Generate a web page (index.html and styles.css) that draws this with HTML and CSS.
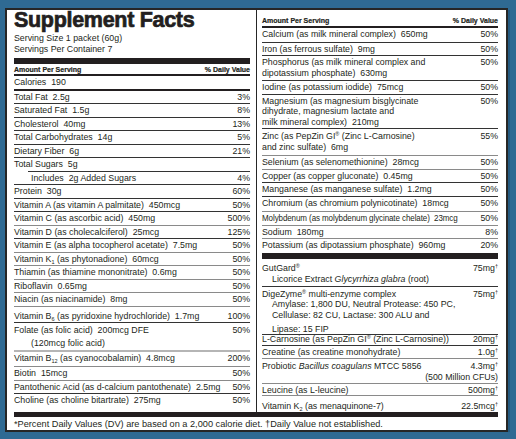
FILE: index.html
```html
<!DOCTYPE html>
<html>

<head>
    <title>Supplement Facts</title>
    <meta charset="utf-8">
    <link rel="stylesheet" href="styles.css">
</head>

<body>

    <div class="label">
        <div class="cols">

            <div class="col venstre">
                <h1>Supplement Facts</h1>
                <p class="serving">Serving Size 1 packet (60g)</p>
                <p class="serving">Servings Per Container 7</p>
                <div class="bar"></div>
                <div class="head"><span>Amount Per Serving</span><span>% Daily Value</span></div>

                <div class="row kalorier"><span>Calories&nbsp; 190</span><span></span></div>
                <div class="row"><span>Total Fat&nbsp; 2.5g</span><span>3%</span></div>
                <div class="row"><span>Saturated Fat&nbsp; 1.5g</span><span>8%</span></div>
                <div class="row"><span>Cholesterol&nbsp; 40mg</span><span>13%</span></div>
                <div class="row"><span>Total Carbohydrates&nbsp; 14g</span><span>5%</span></div>
                <div class="row"><span>Dietary Fiber&nbsp; 6g</span><span>21%</span></div>
                <div class="row sukker"><span>Total Sugars&nbsp; 5g</span><span></span></div>
                <div class="row"><span class="ind">Includes&nbsp; 2g Added Sugars</span><span>4%</span></div>
                <div class="row"><span>Protein&nbsp; 30g</span><span>60%</span></div>
                <div class="row"><span>Vitamin A (as vitamin A palmitate)&nbsp; 450mcg</span><span>50%</span></div>
                <div class="row lys"><span>Vitamin C (as ascorbic acid)&nbsp; 450mg</span><span>500%</span></div>
                <div class="row"><span>Vitamin D (as cholecalciferol)&nbsp; 25mcg</span><span>125%</span></div>
                <div class="row lys"><span>Vitamin E (as alpha tocopherol acetate)&nbsp; 7.5mg</span><span>50%</span></div>
                <div class="row lys"><span>Vitamin K<sub>1</sub> (as phytonadione)&nbsp; 60mcg</span><span>50%</span></div>
                <div class="row lys"><span>Thiamin (as thiamine mononitrate)&nbsp; 0.6mg</span><span>50%</span></div>
                <div class="row lys"><span>Riboflavin&nbsp; 0.65mg</span><span>50%</span></div>
                <div class="row lys"><span>Niacin (as niacinamide)&nbsp; 8mg</span><span>50%</span></div>
                <div class="row b6"><span>Vitamin B<sub>6</sub> (as pyridoxine hydrochloride)&nbsp; 1.7mg</span><span>100%</span></div>
                <div class="row folat"><span>Folate (as folic acid)&nbsp; 200mcg DFE<br><span class="ind">(120mcg folic acid)</span></span><span>50%</span></div>
                <div class="row b12 lys"><span>Vitamin B<sub>12</sub> (as cyanocobalamin)&nbsp; 4.8mcg</span><span>200%</span></div>
                <div class="row lys"><span>Biotin&nbsp; 15mcg</span><span>50%</span></div>
                <div class="row"><span>Pantothenic Acid (as d-calcium pantothenate)&nbsp; 2.5mg</span><span>50%</span></div>
                <div class="row sidste"><span>Choline (as choline bitartrate)&nbsp; 275mg</span><span>50%</span></div>
            </div>

            <div class="col hoejre">
                <div class="head top"><span>Amount Per Serving</span><span>% Daily Value</span></div>

                <div class="row luft"><span>Calcium (as milk mineral complex)&nbsp; 650mg</span><span>50%</span></div>
                <div class="row"><span>Iron (as ferrous sulfate)&nbsp; 9mg</span><span>50%</span></div>
                <div class="row luft"><span>Phosphorus (as milk mineral complex and<br>dipotassium phosphate)&nbsp; 630mg</span><span>50%</span></div>
                <div class="row"><span>Iodine (as potassium iodide)&nbsp; 75mcg</span><span>50%</span></div>
                <div class="row"><span>Magnesium (as magnesium bisglycinate<br>dihydrate, magnesium lactate and<br>milk mineral complex)&nbsp; 210mg</span><span>50%</span></div>
                <div class="row lys zink"><span>Zinc (as PepZin GI<sup>®</sup> (Zinc L-Carnosine)<br>and zinc sulfate)&nbsp; 6mg</span><span>55%</span></div>
                <div class="row lys"><span>Selenium (as selenomethionine)&nbsp; 28mcg</span><span>50%</span></div>
                <div class="row"><span>Copper (as copper gluconate)&nbsp; 0.45mg</span><span>50%</span></div>
                <div class="row"><span>Manganese (as manganese sulfate)&nbsp; 1.2mg</span><span>50%</span></div>
                <div class="row lys luft2"><span>Chromium (as chromium polynicotinate)&nbsp; 18mcg</span><span>50%</span></div>
                <div class="row lys"><span class="smal">Molybdenum (as molybdenum glycinate chelate)&nbsp; 23mcg</span><span>50%</span></div>
                <div class="row lys"><span>Sodium&nbsp; 180mg</span><span>8%</span></div>
                <div class="row ingen"><span>Potassium (as dipotassium phosphate)&nbsp; 960mg</span><span>20%</span></div>
                <div class="bar"></div>

                <div class="row gut"><span>GutGard<sup>®</sup><br><span class="ind2">Licorice Extract <i>Glycyrrhiza glabra</i> (root)</span></span><span>75mg<sup>†</sup></span></div>
                <div class="row enzym">
                    <span>DigeZyme<sup>®</sup> multi-enzyme complex<br><span class="ind2">Amylase: 1,800 DU, Neutral Protease: 450 PC,</span><br><span class="ind2">Cellulase: 82 CU, Lactase: 300 ALU and</span><span class="lipase">Lipase: 15 FIP</span></span>
                    <span>75mg<sup>†</sup></span>
                </div>
                <div class="row taet"><span>L-Carnosine (as PepZin GI<sup>®</sup> (Zinc L-Carnosine))</span><span>20mg<sup>†</sup></span></div>
                <div class="row lys"><span>Creatine (as creatine monohydrate)</span><span>1.0g<sup>†</sup></span></div>
                <div class="row lys probiotik">
                    <div class="linje"><span>Probiotic <i>Bacillus coagulans</i> MTCC 5856</span><span>4.3mg<sup>†</sup></span></div>
                    <div class="cfu">(500 Million CFUs)</div>
                </div>
                <div class="row lys leucin"><span>Leucine (as L-leucine)</span><span>500mg<sup>†</sup></span></div>
                <div class="row sidste k2"><span>Vitamin K<sub>2</sub> (as menaquinone-7)</span><span>22.5mcg<sup>†</sup></span></div>
            </div>

        </div>

        <div class="bar bund"></div>
        <p class="fod">*Percent Daily Values (DV) are based on a 2,000 calorie diet. †Daily Value not established.</p>
    </div>

</body>

</html>
```

FILE: styles.css
```css
body {
    margin: 0;
    background-color: #2f6a93;
    font-family: "Liberation Sans", Arial, sans-serif;
    color: #231f20;
}

.label {
    box-sizing: border-box;
    width: 503px;
    height: 424px;
    margin: 8px 0 0 5px;
    padding: 0 8px 0 7px;
    background-color: #ffffff;
    border: 2px solid #262626;
    box-shadow: 2px 2px 0 #245a80;
}

.cols {
    display: grid;
    grid-template-columns: 236px 1fr;
    column-gap: 6px;
    height: 398px;
}

.col {
    font-size: 8.8px;
    line-height: 10.5px;
}

.hoejre {
    border-left: 1px solid #262626;
    padding-left: 5px;
}

h1 {
    margin: 0;
    font-size: 21.5px;
    line-height: 20px;
    font-weight: bold;
    -webkit-text-stroke: 0.7px #231f20;
    letter-spacing: -0.3px;
}

.serving {
    margin: 0;
    line-height: 11px;
}

h1 + .serving {
    margin-top: 3px;
}

.bar {
    height: 6px;
    margin-top: 3px;
    background-color: #231f20;
}

.head {
    display: flex;
    justify-content: space-between;
    font-size: 7px;
    font-weight: bold;
    line-height: 9px;
    padding-top: 1px;
    -webkit-text-stroke: 0.2px #231f20;
    border-bottom: 2px solid #231f20;
}

.head.top {
    padding-top: 6px;
    line-height: 10px;
}

.row {
    display: flex;
    justify-content: space-between;
    align-items: flex-start;
    padding: 1px 0;
    border-bottom: 1px solid #333;
}

.row span {
    white-space: nowrap;
}

.row > span:last-child {
    text-align: right;
}

.lys {
    border-bottom-color: #8a8a8a;
}

.kalorier {
    border-bottom: 2px solid #231f20;
}

.sukker {
    border-bottom: none;
    background: linear-gradient(#333, #333) no-repeat 14px 100% / calc(100% - 14px) 1px;
    padding-bottom: 2px;
}

.ind {
    padding-left: 17px;
}

.ind2 {
    padding-left: 10px;
}

.b6 {
    padding: 4px 0 1px;
}

.folat {
    padding: 1px 0 0;
    line-height: 13px;
    border-bottom: 2px solid #b5b5b5;
}

.b12 {
    padding: 1px 0 2.5px;
}

.luft {
    padding-bottom: 2px;
}

.zink {
    padding: 2px 0 3px;
}

.luft2 {
    padding-bottom: 3px;
}

.smal {
    display: inline-block;
    width: 196px;
    letter-spacing: -0.1px;
    transform: scaleX(0.91);
    transform-origin: left center;
}

.ingen,
.sidste {
    border-bottom: none;
}

.hoejre .bar {
    margin-top: 1px;
}

.gut {
    padding: 4px 0 0.5px;
    line-height: 11.5px;
}

.enzym {
    padding: 1.5px 0 0;
}

.lipase {
    display: block;
    padding: 3.5px 0 0 10px;
}

.taet {
    padding: 0;
    line-height: 9.5px;
}

.probiotik {
    display: block;
    padding: 1.5px 0 0.5px;
    line-height: 11px;
}

.linje {
    display: flex;
    justify-content: space-between;
}

.cfu {
    text-align: right;
}

.leucin {
    padding: 0.5px 0 0;
}

.k2 {
    padding-top: 4.5px;
}

sub,
sup {
    font-size: 5.5px;
    line-height: 0;
}

sup {
    vertical-align: 3px;
}

sub {
    vertical-align: -2px;
}

.bund {
    height: 5px;
    margin-top: 4px;
}

.fod {
    margin: 2px 0 0;
    font-size: 9.2px;
    line-height: 11px;
}
```
